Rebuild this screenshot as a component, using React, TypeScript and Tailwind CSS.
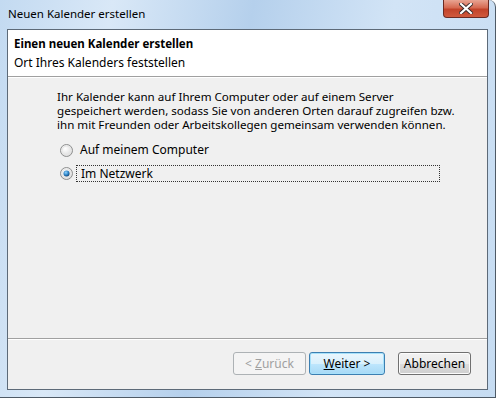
import React from "react";

const font = { fontFamily: '"Noto Sans", "Liberation Sans", sans-serif' };

function Radio({ checked }: { checked?: boolean }) {
  return (
    <svg width="13" height="13" viewBox="0 0 13 13" className="shrink-0">
      <defs>
        <radialGradient id={checked ? "rgc" : "rgu"} cx="0.4" cy="0.35" r="0.7">
          <stop offset="0" stopColor="#ffffff" />
          <stop offset="1" stopColor="#d8d8d8" />
        </radialGradient>
        <radialGradient id="dot" cx="0.4" cy="0.35" r="0.7">
          <stop offset="0" stopColor="#8fd3ff" />
          <stop offset="0.6" stopColor="#2a7fc2" />
          <stop offset="1" stopColor="#0f3c6a" />
        </radialGradient>
      </defs>
      <circle cx="6.5" cy="6.5" r="6" fill={`url(#${checked ? "rgc" : "rgu"})`} stroke="#8e8f8f" strokeWidth="1" />
      <circle cx="6.5" cy="6.5" r="4.5" fill="none" stroke="#e6e6e6" strokeWidth="1" />
      {checked && <circle cx="6.5" cy="6.5" r="3" fill="url(#dot)" />}
    </svg>
  );
}

export default function App() {
  return (
    <div
      className="w-[496px] h-[398px] flex flex-col rounded-tr-[7px] border-r border-b border-[#4e5a66] bg-[linear-gradient(100deg,#c3daf1_0%,#d9e8f7_20%,#b5d0ec_45%,#d2e4f6_70%,#c6dcf2_100%)] text-[12px] text-black"
      style={font}
    >
      {/* title bar */}
      <div className="h-[29px] flex items-start justify-between pl-2 pr-[6px]">
        <span className="mt-[6px] text-[11.5px] leading-[16px]">Neuen Kalender erstellen</span>
        <div className="w-[46px] h-[18px] rounded-b-[4px] border border-t-0 border-[#6b2a22] bg-[linear-gradient(#e8a493_0%,#d66a52_45%,#c2432a_55%,#d0593d_100%)] flex items-center justify-center">
          <svg width="14" height="11" viewBox="0 0 14 11">
            <path d="M2 1 L12 10 M12 1 L2 10" stroke="#3a2a2a" strokeWidth="4" strokeLinecap="square" />
            <path d="M2 1 L12 10 M12 1 L2 10" stroke="#ffffff" strokeWidth="2.2" strokeLinecap="square" />
          </svg>
        </div>
      </div>

      {/* client area */}
      <div className="mx-[7px] mb-[7px] flex-1 flex flex-col border border-[#5d6a78] bg-[#f0f0f0]">
        <div className="h-[47px] bg-white pl-[6px] pt-[5px] border-b border-[#a0a0a0]">
          <div className="font-bold text-[11.5px] leading-[17px]">Einen neuen Kalender erstellen</div>
          <div className="leading-[17px] mt-[2px]">Ort Ihres Kalenders feststellen</div>
        </div>
        <div className="flex-1 border-t border-white pt-[12px] pl-[49px]">
          <p className="text-[11.6px] leading-[14px] whitespace-nowrap">
            Ihr Kalender kann auf Ihrem Computer oder auf einem Server
            <br />
            gespeichert werden, sodass Sie von anderen Orten darauf zugreifen bzw.
            <br />
            ihn mit Freunden oder Arbeitskollegen gemeinsam verwenden können.
          </p>
          <div className="mt-[10px] flex items-center gap-[7px] pl-[3px] h-[16px]">
            <Radio />
            <span>Auf meinem Computer</span>
          </div>
          <div className="mt-[7px] flex items-center gap-[3px] pl-[3px]">
            <Radio checked />
            <span className="w-[364px] h-[17px] leading-[15px] border border-dotted border-[#333] pl-[4px]">
              Im Netzwerk
            </span>
          </div>
        </div>
        <div className="h-[51px] border-t border-[#a0a0a0] flex flex-col">
          <div className="flex-1 border-t border-white flex items-start justify-end pt-[12px] pr-[16px]">
            <button className="w-[73px] h-[23px] rounded-[3px] border border-[#adb2b5] bg-[#f4f4f4] text-[#a0a0a0] leading-[20px]">
              &lt; <span className="underline">Z</span>urück
            </button>
            <button className="ml-[3px] w-[76px] h-[23px] rounded-[3px] border border-[#3c7fb1] bg-[linear-gradient(#eaf6fd_0%,#d9f0fc_50%,#bee6fd_51%,#a7d9f5_100%)] shadow-[inset_0_0_0_1px_#a6e1fb] leading-[20px]">
              <span className="underline">W</span>eiter &gt;
            </button>
            <button className="ml-[13px] w-[73px] h-[23px] rounded-[3px] border border-[#707070] bg-[linear-gradient(#f2f2f2_0%,#ebebeb_50%,#dddddd_51%,#cfcfcf_100%)] shadow-[inset_0_0_0_1px_#fcfcfc] leading-[20px]">
              Abbrechen
            </button>
          </div>
        </div>
      </div>
    </div>
  );
}
